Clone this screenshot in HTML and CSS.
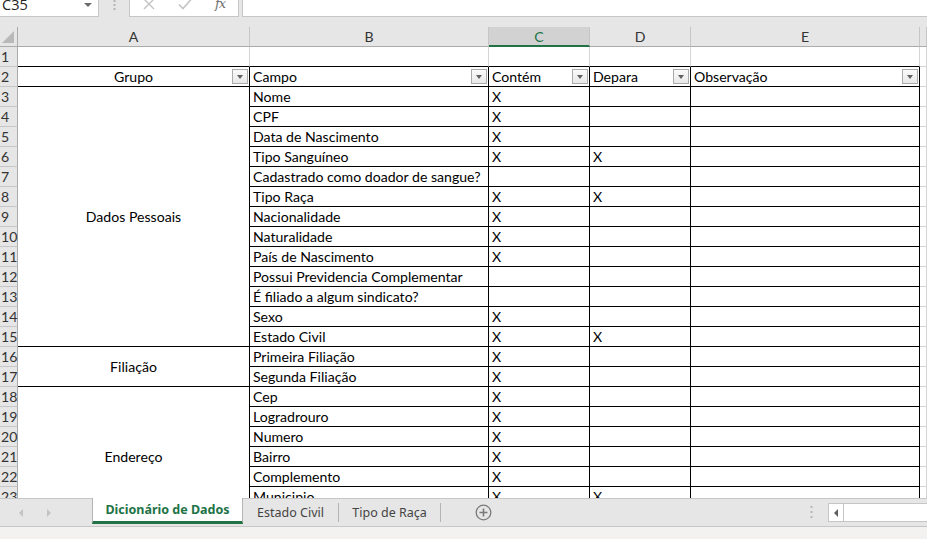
FILE: index.html
```html
<!DOCTYPE html>
<html lang="pt">
<head>
<meta charset="utf-8">
<title>Dicionário de Dados</title>
<link rel="stylesheet" href="styles.css">
</head>
<body>
<div class="app">
  <div class="fbar">
    <div class="namebox"><span class="nb-text">C35</span><span class="nb-arrow"></span></div>
    <div class="fdots"><svg width="3" height="13" viewBox="0 0 3 13"><rect x="0.5" y="0" width="2" height="2" fill="#b5b5b5"/><rect x="0.5" y="4" width="2" height="2" fill="#b5b5b5"/><rect x="0.5" y="8" width="2" height="2" fill="#b5b5b5"/></svg></div>
    <div class="fbtns">
      <svg class="ic-x" width="12" height="12" viewBox="0 0 12 12"><path d="M1 1 L11 11 M11 1 L1 11" stroke="#c4c4c4" stroke-width="1.4" fill="none"/></svg>
      <svg class="ic-ok" width="14" height="12" viewBox="0 0 14 12"><path d="M1 6.5 L5 10.5 L13 1.5" stroke="#c4c4c4" stroke-width="1.6" fill="none"/></svg>
      <span class="ic-fx">fx</span>
    </div>
    <div class="finput"></div>
  </div>
  <div class="spacer"></div>

  <div class="sheet">
    <div class="corner"><span class="tri"></span></div>
    <div class="ch">A</div>
    <div class="ch">B</div>
    <div class="ch sel">C</div>
    <div class="ch">D</div>
    <div class="ch">E</div>
    <div class="ch"></div>

    <div class="rh">1</div>
    <div class="c t"></div><div class="c t"></div><div class="c t"></div><div class="c t"></div><div class="c t"></div><div class="c"></div>

    <div class="rh">2</div>
    <div class="c d hd center">Grupo<span class="fb"></span></div>
    <div class="c d hd">Campo<span class="fb"></span></div>
    <div class="c d hd">Contém<span class="fb"></span></div>
    <div class="c d hd">Depara<span class="fb"></span></div>
    <div class="c d hd">Observação<span class="fb"></span></div>
    <div class="c"></div>

    <div class="rh">3</div>
    <div class="c d m s13">Dados Pessoais</div>
    <div class="c d">Nome</div><div class="c d">X</div><div class="c d"></div><div class="c d"></div><div class="c"></div>
    <div class="rh">4</div>
    <div class="c d">CPF</div><div class="c d">X</div><div class="c d"></div><div class="c d"></div><div class="c"></div>
    <div class="rh">5</div>
    <div class="c d">Data de Nascimento</div><div class="c d">X</div><div class="c d"></div><div class="c d"></div><div class="c"></div>
    <div class="rh">6</div>
    <div class="c d">Tipo Sanguíneo</div><div class="c d">X</div><div class="c d">X</div><div class="c d"></div><div class="c"></div>
    <div class="rh">7</div>
    <div class="c d">Cadastrado como doador de sangue?</div><div class="c d"></div><div class="c d"></div><div class="c d"></div><div class="c"></div>
    <div class="rh">8</div>
    <div class="c d">Tipo Raça</div><div class="c d">X</div><div class="c d">X</div><div class="c d"></div><div class="c"></div>
    <div class="rh">9</div>
    <div class="c d">Nacionalidade</div><div class="c d">X</div><div class="c d"></div><div class="c d"></div><div class="c"></div>
    <div class="rh">10</div>
    <div class="c d">Naturalidade</div><div class="c d">X</div><div class="c d"></div><div class="c d"></div><div class="c"></div>
    <div class="rh">11</div>
    <div class="c d">País de Nascimento</div><div class="c d">X</div><div class="c d"></div><div class="c d"></div><div class="c"></div>
    <div class="rh">12</div>
    <div class="c d">Possui Previdencia Complementar</div><div class="c d"></div><div class="c d"></div><div class="c d"></div><div class="c"></div>
    <div class="rh">13</div>
    <div class="c d">É filiado a algum sindicato?</div><div class="c d"></div><div class="c d"></div><div class="c d"></div><div class="c"></div>
    <div class="rh">14</div>
    <div class="c d">Sexo</div><div class="c d">X</div><div class="c d"></div><div class="c d"></div><div class="c"></div>
    <div class="rh">15</div>
    <div class="c d">Estado Civil</div><div class="c d">X</div><div class="c d">X</div><div class="c d"></div><div class="c"></div>

    <div class="rh">16</div>
    <div class="c d m s2">Filiação</div>
    <div class="c d">Primeira Filiação</div><div class="c d">X</div><div class="c d"></div><div class="c d"></div><div class="c"></div>
    <div class="rh">17</div>
    <div class="c d">Segunda Filiação</div><div class="c d">X</div><div class="c d"></div><div class="c d"></div><div class="c"></div>

    <div class="rh">18</div>
    <div class="c d m s7">Endereço</div>
    <div class="c d">Cep</div><div class="c d">X</div><div class="c d"></div><div class="c d"></div><div class="c"></div>
    <div class="rh">19</div>
    <div class="c d">Logradrouro</div><div class="c d">X</div><div class="c d"></div><div class="c d"></div><div class="c"></div>
    <div class="rh">20</div>
    <div class="c d">Numero</div><div class="c d">X</div><div class="c d"></div><div class="c d"></div><div class="c"></div>
    <div class="rh">21</div>
    <div class="c d">Bairro</div><div class="c d">X</div><div class="c d"></div><div class="c d"></div><div class="c"></div>
    <div class="rh">22</div>
    <div class="c d">Complemento</div><div class="c d">X</div><div class="c d"></div><div class="c d"></div><div class="c"></div>
    <div class="rh">23</div>
    <div class="c d">Municipio</div><div class="c d">X</div><div class="c d">X</div><div class="c d"></div><div class="c"></div>
    <div class="rh">24</div>
    <div class="c d">UF</div><div class="c d">X</div><div class="c d"></div><div class="c d"></div><div class="c"></div>
  </div>

  <div class="tabs">
    <div class="nav">
      <span class="arr-l"></span>
      <span class="arr-r"></span>
    </div>
    <div class="tab active">Dicionário de Dados</div>
    <div class="tab t-ec">Estado Civil</div>
    <div class="tab t-tr">Tipo de Raça</div>
    <div class="add">
      <svg width="17" height="17" viewBox="0 0 17 17"><circle cx="8.5" cy="8.5" r="7.3" fill="none" stroke="#7a7a7a" stroke-width="1.3"/><path d="M8.5 4.5 V12.5 M4.5 8.5 H12.5" stroke="#7a7a7a" stroke-width="1.6"/></svg>
    </div>
    <div class="tab-fill"></div>
    <div class="sdots"><svg width="3" height="13" viewBox="0 0 3 13"><rect x="0.5" y="0" width="2" height="2" fill="#b5b5b5"/><rect x="0.5" y="5" width="2" height="2" fill="#b5b5b5"/><rect x="0.5" y="10" width="2" height="2" fill="#b5b5b5"/></svg></div>
    <div class="hscroll">
      <div class="hs-btn"><span class="hs-arr"></span></div>
    </div>
  </div>
  <div class="status"></div>
</div>
</body>
</html>
```

FILE: styles.css
```css
* { box-sizing: border-box; }

html, body {
  margin: 0;
  padding: 0;
}

body {
  width: 927px;
  height: 539px;
  overflow: hidden;
  background: #e6e6e6;
  font-family: Lato, "Liberation Sans", sans-serif;
}

.app {
  display: flex;
  flex-direction: column;
  height: 539px;
}

/* formula bar */
.fbar {
  height: 17px;
  display: flex;
  overflow: hidden;
  flex: none;
}

.namebox {
  width: 99px;
  height: 17px;
  background: #fff;
  border-right: 1px solid #c6c6c6;
  border-bottom: 1px solid #c6c6c6;
  display: flex;
  align-items: flex-start;
  justify-content: space-between;
  padding: 0 6px 0 2px;
}

.nb-text {
  font-family: "Open Sans", "Noto Sans", sans-serif;
  font-size: 14.5px;
  line-height: 14px;
  margin-top: -2px;
  color: #222;
}

.nb-arrow {
  margin-top: 3px;
  width: 0;
  height: 0;
  border-left: 4px solid transparent;
  border-right: 4px solid transparent;
  border-top: 4px solid #6a6a6a;
}

.fdots {
  width: 30px;
  display: flex;
  justify-content: center;
}

.fbtns {
  width: 110px;
  height: 17px;
  background: #fff;
  border: 1px solid #c6c6c6;
  border-top: none;
  display: flex;
  align-items: flex-start;
  padding-left: 13px;
  gap: 23px;
}

.ic-x { margin-top: -2px; }
.ic-ok { margin-top: -2px; }

.ic-fx {
  font-family: "DejaVu Serif", "Liberation Serif", serif;
  font-style: italic;
  font-size: 13px;
  line-height: 13px;
  margin-top: -3px;
  color: #6f6f6f;
  letter-spacing: -1px;
}

.finput {
  flex: 1;
  margin-left: 3px;
  height: 17px;
  background: #fff;
  border-left: 1px solid #c6c6c6;
  border-bottom: 1px solid #c6c6c6;
}

.spacer {
  height: 10px;
  flex: none;
}

/* sheet */
.sheet {
  height: 471px;
  flex: none;
  overflow: hidden;
  display: grid;
  grid-template-columns: 18px 232px 239px 101px 101px 229px 1fr;
  grid-auto-rows: 20px;
  background: #fff;
  font-size: 14.1px;
  color: #000;
}

.corner {
  background: #e6e6e6;
  border-right: 1px solid #ababab;
  border-bottom: 1px solid #ababab;
  position: relative;
}

.corner .tri {
  position: absolute;
  right: 3px;
  bottom: 3px;
  width: 0;
  height: 0;
  border-left: 12px solid transparent;
  border-bottom: 12px solid #b9b9b9;
}

.ch {
  background: #e6e6e6;
  border-right: 1px solid #c6c6c6;
  border-bottom: 1px solid #ababab;
  text-align: center;
  line-height: 19px;
  color: #333;
}

.ch.sel {
  background: #d2d2d2;
  border-bottom: 2px solid #217346;
  color: #217346;
}

.rh {
  grid-column: 1;
  background: #e6e6e6;
  border-right: 1px solid #ababab;
  border-bottom: 1px solid #c6c6c6;
  line-height: 20px;
  padding-left: 1px;
  color: #333;
  white-space: nowrap;
  overflow: visible;
}

.c {
  border-right: 1px solid #d4d4d4;
  border-bottom: 1px solid #d4d4d4;
  line-height: 20px;
  padding: 0 3px;
  white-space: nowrap;
  overflow: hidden;
  position: relative;
}

.c.t { border-bottom-color: #000; }

.c.d {
  border-right-color: #000;
  border-bottom-color: #000;
}

.c.center { text-align: center; }

.c.m {
  display: flex;
  align-items: center;
  justify-content: center;
}

.s13 { grid-row: span 13; }
.s2 { grid-row: span 2; }
.s7 { grid-row: span 7; }

.fb {
  position: absolute;
  right: 1px;
  top: 2px;
  width: 16px;
  height: 15px;
  border: 1px solid #ababab;
  background: linear-gradient(#fafafa, #e8e8e8);
}

.fb::after {
  content: "";
  position: absolute;
  left: 4px;
  top: 5px;
  width: 0;
  height: 0;
  border-left: 3.5px solid transparent;
  border-right: 3.5px solid transparent;
  border-top: 4px solid #606060;
}

/* tabs */
.tabs {
  height: 29px;
  flex: none;
  display: flex;
  align-items: flex-start;
  border-top: 1px solid #c6c6c6;
  border-bottom: 1px solid #c6c6c6;
  background: #e6e6e6;
  font-family: "Noto Sans", "Open Sans", sans-serif;
  font-size: 12.5px;
}

.nav {
  width: 92px;
  height: 27px;
  display: flex;
  align-items: center;
  padding-left: 19px;
  gap: 24px;
}

.arr-l {
  width: 0;
  height: 0;
  border-top: 4px solid transparent;
  border-bottom: 4px solid transparent;
  border-right: 4px solid #c3c3c3;
}

.arr-r {
  width: 0;
  height: 0;
  border-top: 4px solid transparent;
  border-bottom: 4px solid transparent;
  border-left: 4px solid #c3c3c3;
}

.tab {
  height: 19px;
  margin-top: 4px;
  display: flex;
  align-items: center;
  justify-content: center;
  color: #444;
  border-right: 1px solid #b4b4b4;
  white-space: nowrap;
}

.t-ec { width: 96px; }
.t-tr { width: 102px; }

.tab.active {
  margin-top: -1px;
  height: 26px;
  width: 151px;
  background: #fff;
  border-left: 1px solid #b4b4b4;
  border-right: 1px solid #b4b4b4;
  border-bottom: 3px solid #217346;
  color: #217346;
  font-weight: bold;
}

.add {
  margin-left: 34px;
  margin-top: 5px;
  display: flex;
}

.tab-fill { flex: 1; }

.sdots {
  margin-top: 7px;
  width: 3px;
  margin-right: 15px;
}

.hscroll {
  width: 99px;
  height: 19px;
  margin-top: 4px;
  background: #fff;
  border: 1px solid #c6c6c6;
  border-right: none;
  display: flex;
}

.hs-btn {
  width: 15px;
  border-right: 1px solid #c6c6c6;
  display: flex;
  align-items: center;
  justify-content: center;
}

.hs-arr {
  width: 0;
  height: 0;
  border-top: 4px solid transparent;
  border-bottom: 4px solid transparent;
  border-right: 4px solid #5f5f5f;
}

.status {
  flex: 1;
  background: #f3f2f1;
}
```
